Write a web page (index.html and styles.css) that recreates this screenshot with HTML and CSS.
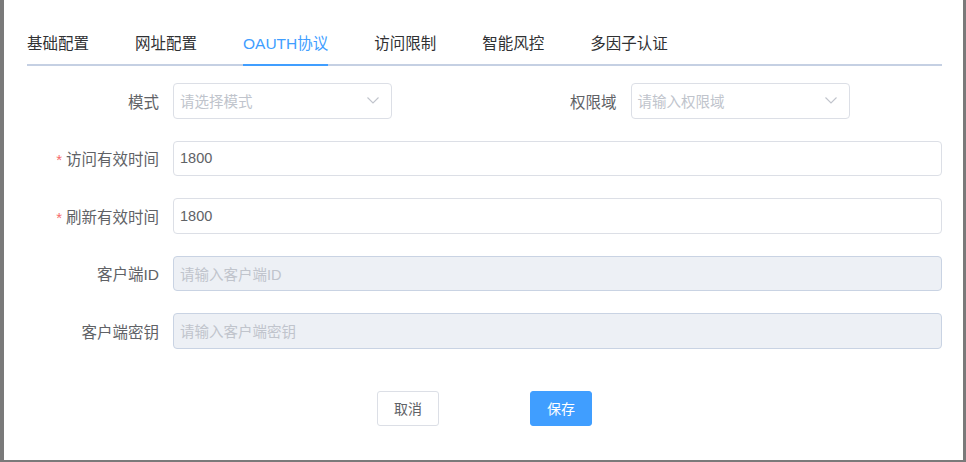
FILE: index.html
```html
<!DOCTYPE html>
<html lang="zh-CN">
<head>
<meta charset="utf-8">
<link rel="stylesheet" href="styles.css">
</head>
<body>
<div class="panel">
  <div class="tabs">
    <div class="tab">基础配置</div>
    <div class="tab">网址配置</div>
    <div class="tab active">OAUTH协议</div>
    <div class="tab">访问限制</div>
    <div class="tab">智能风控</div>
    <div class="tab">多因子认证</div>
  </div>
  <div class="form">
    <div class="row">
      <div class="half">
        <div class="label">模式</div>
        <div class="field select"><span class="ph">请选择模式</span>
          <svg class="chev" width="12" height="7" viewBox="0 0 12 7"><polyline points="0.5,0.5 6,6 11.5,0.5" fill="none" stroke="#c0c4cc" stroke-width="1.1"/></svg>
        </div>
      </div>
      <div class="half">
        <div class="label">权限域</div>
        <div class="field select"><span class="ph">请输入权限域</span>
          <svg class="chev" width="12" height="7" viewBox="0 0 12 7"><polyline points="0.5,0.5 6,6 11.5,0.5" fill="none" stroke="#c0c4cc" stroke-width="1.1"/></svg>
        </div>
      </div>
    </div>
    <div class="row">
      <div class="label"><span class="req">*</span>访问有效时间</div>
      <div class="field">1800</div>
    </div>
    <div class="row">
      <div class="label"><span class="req">*</span>刷新有效时间</div>
      <div class="field">1800</div>
    </div>
    <div class="row">
      <div class="label">客户端ID</div>
      <div class="field disabled"><span class="ph">请输入客户端ID</span></div>
    </div>
    <div class="row">
      <div class="label">客户端密钥</div>
      <div class="field disabled"><span class="ph">请输入客户端密钥</span></div>
    </div>
  </div>
  <div class="actions">
    <button class="btn">取消</button>
    <button class="btn primary">保存</button>
  </div>
</div>
</body>
</html>
```

FILE: styles.css
```css
html, body {
  margin: 0;
  padding: 0;
}
body {
  background: #7a7a7a;
  width: 966px;
  height: 462px;
  overflow: hidden;
  font-family: "Liberation Sans", "Noto Sans CJK SC", sans-serif;
}
.panel {
  margin-left: 4px;
  width: 959px;
  height: 460px;
  background: #fff;
  box-sizing: border-box;
  padding: 24px 21px 0 23px;
}
.tabs {
  display: flex;
  gap: 46px;
  border-bottom: 2px solid #c5d0e3;
  height: 40px;
}
.tab {
  height: 40px;
  line-height: 40px;
  font-size: 15.5px;
  color: #303133;
  border-bottom: 2px solid transparent;
}
.tab.active {
  color: #409eff;
  border-bottom-color: #409eff;
}
.form {
  padding-top: 17px;
  padding-bottom: 20px;
}
.row {
  display: flex;
  align-items: center;
  height: 35.5px;
  margin-bottom: 22px;
}
.row:last-child {
  margin-bottom: 0;
}
.half {
  display: flex;
  align-items: center;
  width: 457.5px;
  height: 100%;
}
.half .field {
  flex: none;
  width: 219px;
}
.label {
  width: 132px;
  flex: none;
  padding-right: 14px;
  text-align: right;
  font-size: 15.5px;
  color: #606266;
}
.req {
  color: #f56c6c;
  margin-right: 4px;
  font-size: 15px;
}
.field {
  flex: 1;
  height: 100%;
  box-sizing: border-box;
  border: 1px solid #dcdfe6;
  border-radius: 4px;
  padding: 0 12px 0 6px;
  display: flex;
  align-items: center;
  font-size: 14.5px;
  color: #606266;
}
.select {
  justify-content: space-between;
}
.ph {
  color: #c0c4cc;
}
.disabled {
  background: #edf0f5;
  border-color: #c9d3e3;
}
.actions {
  display: flex;
  justify-content: center;
  gap: 91px;
  margin-top: 22px;
}
.btn {
  width: 62px;
  height: 35.5px;
  box-sizing: border-box;
  border: 1px solid #dcdfe6;
  border-radius: 3px;
  background: #fff;
  color: #606266;
  font-size: 14px;
  font-family: "Liberation Sans", "Noto Sans CJK SC", sans-serif;
  padding: 0;
}
.btn.primary {
  background: #409eff;
  border-color: #409eff;
  color: #fff;
}
```
